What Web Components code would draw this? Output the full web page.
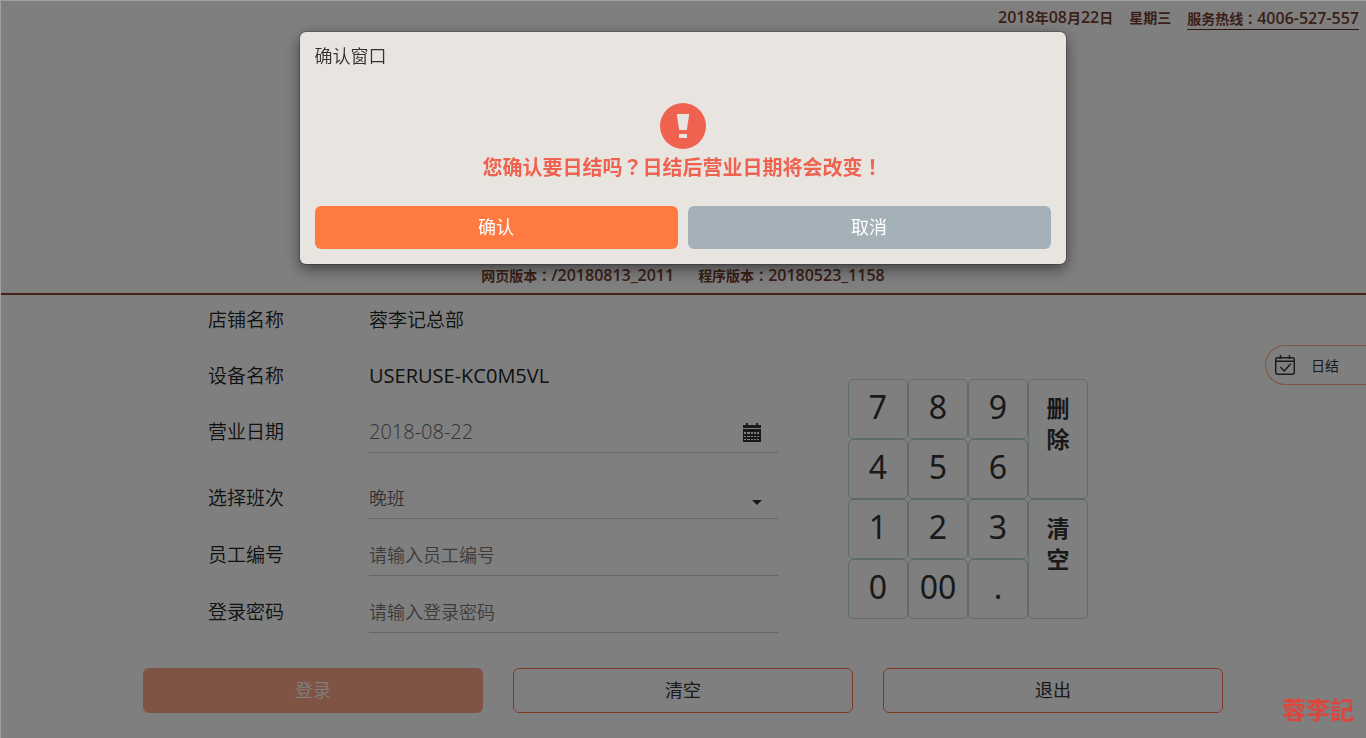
<!DOCTYPE html>
<html lang="zh-CN">
<head>
<meta charset="utf-8">
<title>收银登录</title>
<style>
  html, body { margin: 0; min-height: 100%; }
  body {
    background: #fff;
    color: #333;
    font-family: "Open Sans", "Noto Sans CJK SC", sans-serif;
    font-size: 18px;
  }
</style>
</head>
<body>
<pos-app></pos-app>

<template id="t-app">
  <style>
    :host { display: block; position: relative; min-height: 100vh; overflow: hidden; }
    main { box-sizing: border-box; max-width: 1080px; margin: 0 auto; padding: 5px 0 24px; }
    .area { display: grid; grid-template-columns: minmax(0, 1fr) 240px; gap: 70px; padding: 0 135px 0 65px; }
    .fields, .group { display: flex; flex-direction: column; }
    .fields { gap: 25px; }
    .group { gap: 16px; }
    .latin { font-size: 20px; font-weight: 400; }
    num-pad { margin-top: 79px; }
    .actions { display: grid; grid-template-columns: repeat(3, 1fr); gap: 30px; margin-top: 35px; }
    day-end { position: absolute; right: 0; top: 345px; }
    brand-mark { position: fixed; right: 12px; bottom: 12px; z-index: 3; }
  </style>
  <pos-header></pos-header>
  <main>
    <div class="area">
      <div class="fields">
        <div class="group">
          <pos-field kind="text" label="店铺名称">蓉李记总部</pos-field>
          <pos-field kind="text" label="设备名称"><span class="latin">USERUSE-KC0M5VL</span></pos-field>
          <pos-field kind="date" label="营业日期" value="2018-08-22"></pos-field>
        </div>
        <div class="group">
          <pos-field kind="select" label="选择班次" value="晚班"></pos-field>
          <pos-field kind="input" label="员工编号" placeholder="请输入员工编号"></pos-field>
          <pos-field kind="password" label="登录密码" placeholder="请输入登录密码"></pos-field>
        </div>
      </div>
      <num-pad></num-pad>
    </div>
    <div class="actions">
      <pos-button look="primary">登录</pos-button>
      <pos-button look="outline">清空</pos-button>
      <pos-button look="outline">退出</pos-button>
    </div>
  </main>
  <day-end></day-end>
  <confirm-dialog heading="确认窗口">您确认要日结吗<span class="p" lang="zh-TW">？</span>日结后营业日期将会改变<span class="p" lang="zh-TW">！</span></confirm-dialog>
  <brand-mark></brand-mark>
</template>

<template id="t-header">
  <style>
    :host {
      display: flex; flex-direction: column; justify-content: space-between;
      box-sizing: border-box; min-height: 295px; padding: 7px 7px 6px;
      border-bottom: 2px solid #8f4328;
      color: #74402f; font-size: 14px; font-weight: 700; line-height: 22px;
    }
    .top, .versions { display: flex; white-space: nowrap; }
    .top { justify-content: flex-end; gap: 16px; }
    .versions { justify-content: center; gap: 24px; }
    b { font: 600 16px/21px "Open Sans", sans-serif; }
    i { font-style: normal; font-family: "Noto Sans CJK TC", sans-serif; }
    a { color: inherit; text-decoration: none; border-bottom: 1px solid #5a3020; height: 22px; }
  </style>
  <div class="top">
    <span><b>2018</b>年<b>08</b>月<b>22</b>日</span>
    <span>星期三</span>
    <a href="tel:4006527557">服务热线<i lang="zh-TW">：</i><b>4006-527-557</b></a>
  </div>
  <div class="versions">
    <span>网页版本<i lang="zh-TW">：</i><b>/20180813_2011</b></span>
    <span>程序版本<i lang="zh-TW">：</i><b>20180523_1158</b></span>
  </div>
</template>

<template id="t-field">
  <style>
    :host { display: grid; grid-template-columns: 161px minmax(0, 1fr); line-height: 40px; font-weight: 350; }
    label, .label { font-size: 19px; color: #222; }
    .text { font-size: 19px; color: #222; height: 40px; }
    .box { display: flex; align-items: center; height: 40px; border-bottom: 1px solid #ccc; position: relative; }
    input, select {
      appearance: none; border: 0; outline: 0; background: none; padding: 0; margin: 0;
      flex: 1; min-width: 0; height: 40px; font: inherit; color: #666;
    }
    input.date { font-size: 20px; }
    input::placeholder { color: #777; opacity: 1; }
    .cal { border: 0; background: none; padding: 0; margin: 0 17px 0 0; display: flex; }
    .caret { position: absolute; right: 16px; top: 22px; pointer-events: none; }
  </style>
</template>

<template id="t-pad">
  <style>
    :host { display: block; color: #333; }
    .grid { display: grid; grid-template-columns: repeat(4, minmax(0, 1fr)); grid-auto-rows: 60px; }
    button {
      border: 1px solid #bdd6d6; border-radius: 5px; background: none; color: inherit;
      margin: 0; padding: 0 0 4px; font: 400 32px/54px "Noto Sans", sans-serif;
    }
    .tall {
      grid-row: span 2; display: flex; justify-content: center; align-items: flex-start;
      padding: 12px 0 0; font: 700 23px/31px "Noto Sans CJK SC", sans-serif;
    }
  </style>
  <div class="grid">
    <button>7</button><button>8</button><button>9</button><button class="tall">删<br>除</button>
    <button>4</button><button>5</button><button>6</button>
    <button>1</button><button>2</button><button>3</button><button class="tall">清<br>空</button>
    <button>0</button><button>00</button><button>.</button>
  </div>
</template>

<template id="t-button">
  <style>
    :host { display: block; }
    button {
      box-sizing: border-box; display: block; width: 100%; height: 45px; margin: 0; padding: 0 0 3px;
      border: 1px solid transparent; border-radius: 6px; background: none;
      font: inherit; font-size: 18px; color: #333;
    }
    :host([look="primary"]) button { background: #ffa988; color: #fff; font-weight: 350; }
    :host([look="outline"]) button { border-color: #ff7840; }
    :host([look="confirm"]) button { background: #ff7a40; color: #fff; height: 43px; }
    :host([look="cancel"]) button { background: #a4b1b8; color: #fff; height: 43px; }
  </style>
  <button type="button"><slot></slot></button>
</template>

<template id="t-dayend">
  <style>
    :host { display: block; }
    button {
      box-sizing: border-box; display: flex; align-items: center; gap: 16px;
      width: 101px; height: 40px; margin: 0; padding: 0 0 0 9px;
      border: 1px solid #ffa988; border-right: 0; border-radius: 20px 0 0 20px;
      background: none; color: #333; font: inherit; font-size: 14px;
    }
  </style>
  <button type="button">
    <svg width="20" height="20" viewBox="0 0 20 20" fill="none" stroke="#333" stroke-width="1.4" aria-hidden="true">
      <rect x=".7" y="2.7" width="18.6" height="16.6" rx="2"/>
      <path d="M.7 6.3h18.6M5.500 0v4M14.500 0v4M5.300 12l4 4 6.400-7.200"/>
    </svg>
    <span>日结</span>
  </button>
</template>

<template id="t-brand">
  <style>
    :host { display: block; color: #dc463c; font: 700 24px/34px "Noto Sans CJK TC", sans-serif; }
  </style>
  <span>蓉李記</span>
</template>

<template id="t-dialog">
  <style>
    :host {
      position: fixed; inset: 0; z-index: 2; display: block; padding: 31px 20px 0 18px;
      background: rgba(0, 0, 0, .5); border: solid #a0a0a0; border-width: 1px 0 0 1px;
    }
    dialog {
      position: static; box-sizing: border-box; width: auto; max-width: 766px; margin: 0 auto; padding: 0;
      border: 0; border-radius: 6px; background: #e8e5e0; color: #333;
      box-shadow: 0 0 0 1px rgba(0, 0, 0, .2), 0 5px 15px rgba(0, 0, 0, .5);
    }
    h2 {
      box-sizing: border-box; height: 56px; margin: 0; padding: 11px 15px 0; border-bottom: 1px solid #e5e5e5;
      font-size: 18px; line-height: 27px; font-weight: 350;
    }
    .body { padding: 15px 15px 23px; text-align: center; color: #ef624f; }
    svg { display: block; margin: 0 auto; }
    p { margin: 3px 0 0; font-size: 20px; line-height: 30px; font-weight: 700; }
    ::slotted(.p) { font-family: "Noto Sans CJK TC", sans-serif; }
    footer { display: grid; grid-template-columns: 1fr 1fr; gap: 10px; padding: 0 15px 15px; }
  </style>
  <dialog open aria-labelledby="heading">
    <h2 id="heading"></h2>
    <div class="body">
      <svg width="46" height="46" viewBox="0 0 46 46" aria-hidden="true">
        <circle cx="23" cy="23" r="23" fill="#ef624f"/>
        <path d="M17.500 11h11q.7 0 .6.900l-2.100 14q-.1 1-1 1h-6q-.9 0-1-1l-2.100-14q-.1-.900.6-.900zM19 31h8v4h-8z" fill="#e8e5e0"/>
      </svg>
      <p><slot></slot></p>
    </div>
    <footer>
      <pos-button look="confirm">确认</pos-button>
      <pos-button look="cancel">取消</pos-button>
    </footer>
  </dialog>
</template>

<script>
  class TemplateElement extends HTMLElement {
    constructor() {
      super();
      const t = document.getElementById(this.constructor.template);
      this.attachShadow({ mode: 'open' }).append(t.content.cloneNode(true));
    }
  }

  class PosHeader extends TemplateElement { static template = 't-header'; }
  class NumPad extends TemplateElement { static template = 't-pad'; }
  class PosButton extends TemplateElement { static template = 't-button'; }
  class DayEnd extends TemplateElement { static template = 't-dayend'; }
  class BrandMark extends TemplateElement { static template = 't-brand'; }
  class PosApp extends TemplateElement { static template = 't-app'; }

  class ConfirmDialog extends TemplateElement {
    static template = 't-dialog';
    connectedCallback() {
      this.shadowRoot.getElementById('heading').textContent = this.getAttribute('heading');
    }
  }

  const CALENDAR = `<svg width="18" height="19" viewBox="0 0 18 19" aria-hidden="true">
    <path fill="#333" fill-rule="evenodd" d="M3 0h2v2h8V0h2v2h3v3H0V2h3zM0 6h18v13H0zM1 9v2h2V9zm3 0v2h3V9zm4 0v2h2V9zm3 0v2h2V9zm3 0v2h2V9zM1 13v1h2v-1zm3 0v1h3v-1zm4 0v1h2v-1zm3 0v1h2v-1zm3 0v1h2v-1zM1 16v1h2v-1zm3 0v1h3v-1zm4 0v1h2v-1zm3 0v1h2v-1zm3 0v1h2v-1z"/></svg>`;
  const CARET = `<svg class="caret" width="10" height="5" viewBox="0 0 10 5" aria-hidden="true"><path d="M0 0h10L5 5z" fill="#333"/></svg>`;

  class PosField extends TemplateElement {
    static template = 't-field';
    connectedCallback() {
      const kind = this.getAttribute('kind');
      const label = this.getAttribute('label');
      const value = this.getAttribute('value') || '';
      const hint = this.getAttribute('placeholder') || '';
      const body = {
        text: () => `<span class="label">${label}</span><span class="text"><slot></slot></span>`,
        date: () => `<label for="c">${label}</label><div class="box"><input id="c" class="date" value="${value}" readonly><button class="cal" type="button" aria-label="${label}">${CALENDAR}</button></div>`,
        select: () => `<label for="c">${label}</label><div class="box"><select id="c"><option>${value}</option></select>${CARET}</div>`,
        input: () => `<label for="c">${label}</label><div class="box"><input id="c" placeholder="${hint}"></div>`,
        password: () => `<label for="c">${label}</label><div class="box"><input id="c" type="password" placeholder="${hint}"></div>`
      }[kind]();
      this.shadowRoot.append(document.createRange().createContextualFragment(body));
    }
  }

  customElements.define('pos-header', PosHeader);
  customElements.define('pos-field', PosField);
  customElements.define('num-pad', NumPad);
  customElements.define('pos-button', PosButton);
  customElements.define('day-end', DayEnd);
  customElements.define('brand-mark', BrandMark);
  customElements.define('confirm-dialog', ConfirmDialog);
  customElements.define('pos-app', PosApp);
</script>
</body>
</html>
